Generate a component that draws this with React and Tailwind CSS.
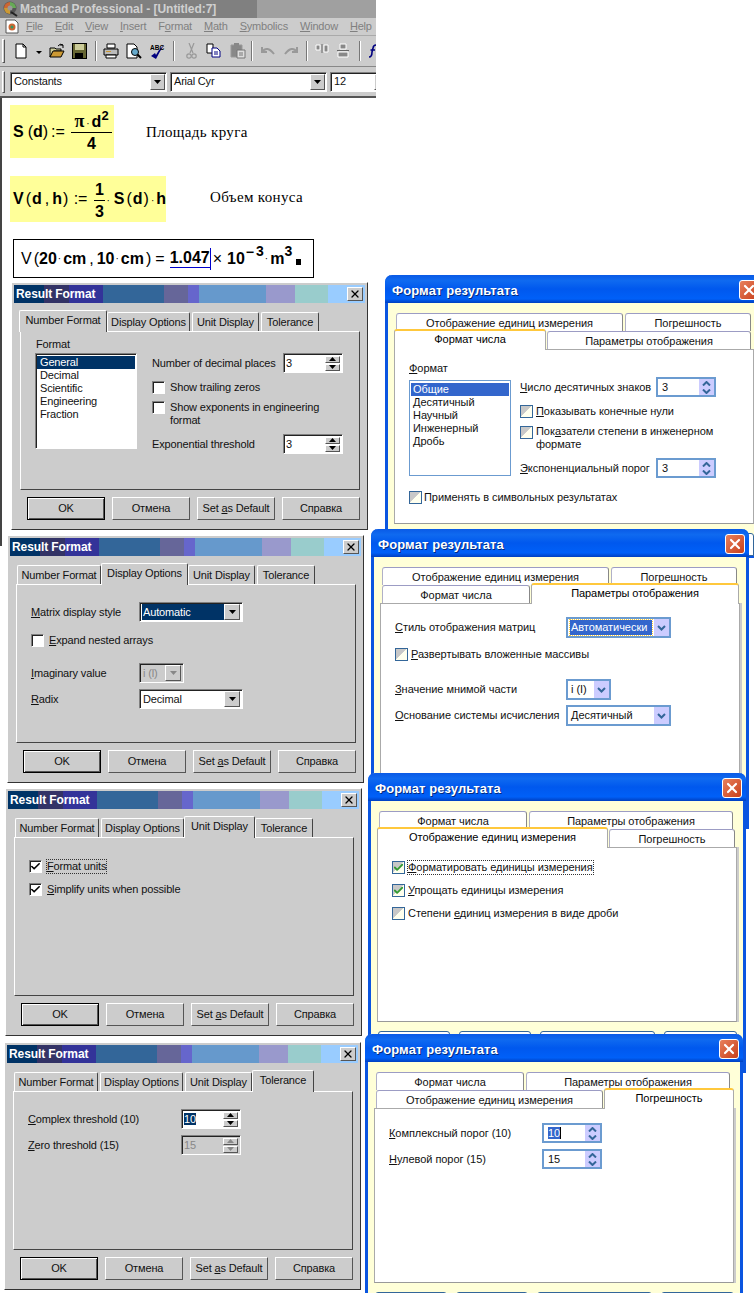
import { Check, X } from 'lucide-react'

const sunken = 'border border-t-[#808080] border-l-[#808080] border-r-white border-b-white shadow-[inset_1px_1px_0_#222]'
const raised = 'border border-t-white border-l-white border-r-[#555] border-b-[#555] bg-[#ccc]'

function Tri({ up = false, color = '#000' }) {
  return (
    <svg width="7" height="4" viewBox="0 0 7 4" className="block">
      <path d={up ? 'M3.5 0 L7 4 L0 4 Z' : 'M0 0 L7 0 L3.5 4 Z'} fill={color} />
    </svg>
  )
}

/* ---------- Win2k "Result Format" dialog ---------- */

function WinSpin({ value, selected, disabled }) {
  return (
    <div className={`${sunken} flex h-[20px] w-[60px] items-center pl-[2px] pr-[2px] ${disabled ? 'bg-[#ccc] text-[#888]' : 'bg-white'}`}>
      <span className="flex-1 leading-[14px]"><span className={selected ? 'bg-[#003366] text-white' : ''}>{value}</span></span>
      <div className="flex flex-col gap-[1px]">
        <div className={`${raised} flex h-[7px] w-[15px] items-center justify-center`}><Tri up color={disabled ? '#888' : '#000'} /></div>
        <div className={`${raised} flex h-[7px] w-[15px] items-center justify-center`}><Tri color={disabled ? '#888' : '#000'} /></div>
      </div>
    </div>
  )
}

function WinCombo({ value, className, selected, disabled }) {
  return (
    <div className={`${sunken} flex h-[20px] items-center pl-[2px] pr-[2px] ${disabled ? 'bg-[#ccc] text-[#888]' : 'bg-white'} ${className}`}>
      <span className={`flex h-[16px] flex-1 items-center pl-[1px] ${selected ? 'bg-[#003366] text-white' : ''}`}>{value}</span>
      <div className={`${raised} flex h-[16px] w-[16px] items-center justify-center`}><Tri color={disabled ? '#888' : '#000'} /></div>
    </div>
  )
}

function WinCheck({ checked, className = '' }) {
  return (
    <span className={`${sunken} flex h-[13px] w-[13px] shrink-0 items-center justify-center bg-white ${className}`}>
      {checked && <Check size={11} strokeWidth={3.5} color="#000" />}
    </span>
  )
}

const winTabs = [
  { label: 'Number Format', w: 'w-[84px]' },
  { label: 'Display Options', w: 'w-[83px]' },
  { label: 'Unit Display', w: 'w-[67px]' },
  { label: 'Tolerance', w: 'w-[58px]' },
]

function ResultFormat({ pos, active, children }) {
  return (
    <div className={`absolute ${pos} h-[248px] w-[357px] border border-t-white border-l-white border-r-[#333] border-b-[#333] bg-[#ccc] p-[2px] text-[11px] leading-[13px] tracking-[-0.15px] text-[#111]`}>
      <div className="flex h-[18px] items-stretch">
        <div className="w-[30px] bg-[#003366]" />
        <div className="w-[25px] bg-[#333366]" />
        <div className="w-[34px] bg-[#333399]" />
        <div className="w-[61px] bg-[#336699]" />
        <div className="w-[24px] bg-[#666699]" />
        <div className="w-[11px] bg-[#6666cc]" />
        <div className="w-[67px] bg-[#6699cc]" />
        <div className="w-[29px] bg-[#9999cc]" />
        <div className="w-[33px] bg-[#99cccc]" />
        <div className="relative flex-1 bg-[#99ccff]">
          <div className={`${raised} absolute right-[2px] top-[2px] flex h-[14px] w-[16px] items-center justify-center`}>
            <X size={12} strokeWidth={2.6} color="#000" />
          </div>
        </div>
        <span className="absolute left-[4px] top-[2px] flex h-[18px] items-center text-[12px] font-bold tracking-[-0.1px] text-white">Result Format</span>
      </div>
      <div className="mt-[8px] flex h-[20px] gap-[2px] pl-[7px]">
        {winTabs.map((t, i) => (
          <div key={t.label} className={`relative ${t.w} ${i === active ? 'z-10' : ''}`}>
            <div className={`absolute flex items-center justify-center whitespace-nowrap rounded-t-[2px] border-t border-l border-r border-t-white border-l-white border-r-[#444] bg-[#ccc] ${i === active ? '-inset-x-[2px] -top-[1px] bottom-[-1px] pb-[3px]' : 'inset-x-0 top-[1px] bottom-0'}`}>
              {t.label}
            </div>
          </div>
        ))}
      </div>
      <div className="ml-[6px] h-[159px] w-[340px] border border-t-white border-l-white border-r-[#444] border-b-[#444]">{children}</div>
      <div className="ml-[13px] mt-[7px] flex gap-[7px]">
        <div className="flex h-[23px] w-[78px] items-center justify-center border border-black bg-[#ccc] shadow-[inset_1px_1px_0_#fff,inset_-1px_-1px_0_#555]">OK</div>
        <div className={`${raised} flex h-[23px] w-[78px] items-center justify-center`}>Отмена</div>
        <div className={`${raised} flex h-[23px] w-[78px] items-center justify-center`}><span>Set <u>a</u>s Default</span></div>
        <div className={`${raised} flex h-[23px] w-[78px] items-center justify-center`}>Справка</div>
      </div>
    </div>
  )
}

function NumberFormatPage() {
  return (
    <div className="flex pl-[14px] pt-[6px]">
      <div>
        <div className="pl-[1px]">Format</div>
        <div className={`${sunken} mt-[2px] h-[96px] w-[102px] bg-white p-[1px] pt-[2px]`}>
          {['General', 'Decimal', 'Scientific', 'Engineering', 'Fraction'].map((f, i) => (
            <div key={f} className={`h-[13px] pl-[3px] ${i === 0 ? 'bg-[#003366] text-white' : ''}`}>{f}</div>
          ))}
        </div>
      </div>
      <div className="ml-[15px] w-[191px] pt-[15px]">
        <div className="flex items-center justify-between"><span className="whitespace-nowrap">Number of decimal places</span><WinSpin value="3" /></div>
        <div className="mt-[7px] flex h-[14px] items-center gap-[5px]"><WinCheck />Show trailing zeros</div>
        <div className="mt-[7px] flex gap-[5px]"><WinCheck /><span>Show exponents in engineering<br />format</span></div>
        <div className="mt-[7px] flex items-center justify-between"><span>Exponential threshold</span><WinSpin value="3" /></div>
      </div>
    </div>
  )
}

function DisplayOptionsPage() {
  return (
    <div className="pl-[14px] pt-[17px]">
      <div className="flex items-center"><span className="w-[108px]"><u>M</u>atrix display style</span><WinCombo value="Automatic" selected className="w-[104px]" /></div>
      <div className="mt-[12px] flex items-center gap-[5px]"><WinCheck /><span><u>E</u>xpand nested arrays</span></div>
      <div className="mt-[16px] flex items-center"><span className="w-[108px]"><u>I</u>maginary value</span><WinCombo value="i (l)" disabled className="w-[45px]" /></div>
      <div className="mt-[6px] flex items-center"><span className="w-[108px]"><u>R</u>adix</span><WinCombo value="Decimal" className="w-[104px]" /></div>
    </div>
  )
}

function UnitDisplayPage() {
  return (
    <div className="pl-[14px] pt-[22px]">
      <div className="flex items-center gap-[5px]"><WinCheck checked /><span className="outline-1 outline-dotted outline-[#333]"><u>F</u>ormat units</span></div>
      <div className="mt-[10px] flex items-center gap-[5px]"><WinCheck checked /><span><u>S</u>implify units when possible</span></div>
    </div>
  )
}

function TolerancePage() {
  return (
    <div className="pl-[14px] pt-[17px]">
      <div className="flex items-center"><span className="w-[153px]"><u>C</u>omplex threshold (10)</span><WinSpin value="10" selected /></div>
      <div className="mt-[6px] flex items-center"><span className="w-[153px]"><u>Z</u>ero threshold (15)</span><WinSpin value="15" disabled /></div>
    </div>
  )
}

/* ---------- XP themed dialog ---------- */

function XpSpin({ value, selected }) {
  return (
    <div className="flex h-[20px] w-[60px] items-center border-2 border-[#6b9bd0] bg-white pl-[4px]">
      <span className="flex-1"><span className={selected ? 'bg-[#3366cc] text-white' : ''}>{value}</span>{selected && <span className="border-r border-black" />}</span>
      <div className="flex h-[16px] w-[15px] flex-col items-center justify-center gap-[3px] bg-[#ccccff]">
        <svg width="9" height="5" viewBox="0 0 9 5"><path d="M1 4.5 L4.5 1 L8 4.5" fill="none" stroke="#336699" strokeWidth="2" /></svg>
        <svg width="9" height="5" viewBox="0 0 9 5"><path d="M1 .5 L4.5 4 L8 .5" fill="none" stroke="#336699" strokeWidth="2" /></svg>
      </div>
    </div>
  )
}

function XpCombo({ value, selected, className }) {
  return (
    <div className={`flex h-[21px] items-center border-2 border-[#6b9bd0] bg-white pl-[2px] ${className}`}>
      <span className={`flex h-[15px] flex-1 items-center pl-[1px] ${selected ? 'mr-[2px] bg-[#3366cc] text-white outline-1 outline-dotted outline-[#ffcc33]' : ''}`}>{value}</span>
      <div className="flex h-[17px] w-[15px] items-center justify-center bg-[#ccccff]">
        <svg width="9" height="6" viewBox="0 0 9 6"><path d="M1 1 L4.5 4.5 L8 1" fill="none" stroke="#336699" strokeWidth="2" /></svg>
      </div>
    </div>
  )
}

function XpCheck({ checked, className = '' }) {
  return (
    <span className={`relative flex h-[13px] w-[13px] shrink-0 items-center justify-center border border-[#336699] bg-[linear-gradient(135deg,#c8c8c8_45%,#ffffee_50%)] ${className}`}>
      {checked && <Check size={11} strokeWidth={4} color="#339933" />}
    </span>
  )
}

function XpTab({ label, w, active }) {
  return (
    <div className={`relative h-[18px] ${w} ${active ? 'z-10' : ''}`}>
      <div className={`absolute flex items-center justify-center whitespace-nowrap rounded-t-[3px] bg-white ${active ? '-inset-x-[2px] -top-[2px] bottom-[-1px] border-x border-x-[#aaa] border-t-2 border-t-[#ffc83c] pb-[3px] text-black' : 'inset-0 border-t border-l border-r border-t-[#9c9cc4] border-l-[#b0b0c8] border-r-[#888] pt-[2px]'}`}>
        {label}
      </div>
    </div>
  )
}

function XpDialog({ pos, rows, active, children }) {
  return (
    <div className={`absolute ${pos} w-[378px] rounded-t-[7px] border-x-[3px] border-b-[3px] border-[#0a55e0] bg-[#ffffd8] text-[11px] leading-[13px] tracking-[-0.05px] text-[#111]`}>
      <div className="relative -mx-[3px] flex h-[28px] items-center rounded-t-[7px] bg-[linear-gradient(to_bottom,#0a5ae6_0%,#0f6af0_20%,#0058ee_50%,#0060f8_85%,#003fc0_100%)] pl-[7px] pt-[3px]">
        <span className="text-[13px] font-bold tracking-[0.1px] text-white [text-shadow:1px_1px_0_#002a80]">Формат результата</span>
        <div className="absolute right-[4px] top-[5px] flex h-[20px] w-[20px] items-center justify-center rounded-[3px] border border-white bg-[linear-gradient(135deg,#e8805c,#c8401c)]">
          <X size={16} strokeWidth={3.2} color="#fff" />
        </div>
      </div>
      <div className="px-[6px] pt-[10px]">
        {rows.map((row, r) => (
          <div key={r} className={`flex pl-[2px] ${r === 0 ? 'gap-[2px]' : 'gap-[3px]'}`}>
            {row.map(t => <XpTab key={t.label} label={t.label} w={t.w} active={t.label === active} />)}
          </div>
        ))}
        <div className="h-[175px] w-[360px] border border-[#aaa] border-b-[#999] border-r-[#aaa] bg-white shadow-[2px_0_0_#ccc]">{children}</div>
        <div className="mt-[9px] flex gap-[9px] pl-[1px]">
          {['w-[72px]', 'w-[72px]', 'w-[115px]', 'w-[73px]'].map((w, i) => (
            <div key={i} className={`h-[23px] ${w} rounded-t-[3px] border border-[#336699] bg-white`} />
          ))}
        </div>
      </div>
    </div>
  )
}

const tabA = { label: 'Формат числа', w: 'w-[148px]' }
const tabB = { label: 'Параметры отображения', w: 'w-[204px]' }
const tabC = { label: 'Отображение единиц измерения', w: 'w-[227px]' }
const tabD = { label: 'Погрешность', w: 'w-[126px]' }

function XpNumberPage() {
  return (
    <div className="px-[14px] pt-[12px]">
      <div className="flex">
        <div>
          <div><u>Ф</u>ормат</div>
          <div className="mt-[5px] h-[96px] w-[102px] border border-[#6b9bd0] bg-white p-[1px] pt-[2px]">
            {['Общие', 'Десятичный', 'Научный', 'Инженерный', 'Дробь'].map((f, i) => (
              <div key={f} className={`h-[13px] pl-[2px] ${i === 0 ? 'bg-[#3366cc] text-white' : ''}`}>{f}</div>
            ))}
          </div>
        </div>
        <div className="ml-[9px] w-[196px] pt-[15px]">
          <div className="flex items-center justify-between"><span className="whitespace-nowrap"><u>Ч</u>исло десятичных знаков</span><XpSpin value="3" /></div>
          <div className="mt-[8px] flex h-[13px] items-center gap-[3px]"><XpCheck /><span><u>П</u>оказывать конечные нули</span></div>
          <div className="mt-[7px] flex gap-[3px]"><XpCheck className="mt-[1px]" /><span className="whitespace-nowrap">Пок<u>а</u>затели степени в инженерном<br />формате</span></div>
          <div className="mt-[7px] flex items-center justify-between"><span className="whitespace-nowrap"><u>Э</u>кспоненциальный порог</span><XpSpin value="3" /></div>
        </div>
      </div>
      <div className="mt-[13px] flex items-center gap-[2px]"><XpCheck />Применять в символьных результатах</div>
    </div>
  )
}

function XpDisplayPage() {
  return (
    <div className="pl-[14px] pt-[13px]">
      <div className="flex items-center"><span className="w-[171px]"><u>С</u>тиль отображения матриц</span><XpCombo value="Автоматически" selected className="w-[105px]" /></div>
      <div className="mt-[10px] flex items-center gap-[3px]"><XpCheck /><span><u>Р</u>азвертывать вложенные массивы</span></div>
      <div className="mt-[18px] flex items-center"><span className="w-[171px]"><u>З</u>начение мнимой части</span><XpCombo value="i (I)" className="w-[45px]" /></div>
      <div className="mt-[5px] flex items-center"><span className="w-[171px] whitespace-nowrap"><u>О</u>снование системы исчисления</span><XpCombo value="Десятичный" className="w-[105px]" /></div>
    </div>
  )
}

function XpUnitPage() {
  return (
    <div className="pl-[14px] pt-[13px]">
      <div className="flex items-center gap-[3px]"><XpCheck checked /><span className="outline-1 outline-dotted outline-[#333]"><u>Ф</u>орматировать единицы измерения</span></div>
      <div className="mt-[10px] flex items-center gap-[3px]"><XpCheck checked /><span><u>У</u>прощать единицы измерения</span></div>
      <div className="mt-[10px] flex items-center gap-[3px]"><XpCheck /><span>Степени <u>е</u>диниц измерения в виде дроби</span></div>
    </div>
  )
}

function XpTolerancePage() {
  return (
    <div className="pl-[14px] pt-[14px]">
      <div className="flex items-center"><span className="w-[153px]"><u>К</u>омплексный порог (10)</span><XpSpin value="10" selected /></div>
      <div className="mt-[6px] flex items-center"><span className="w-[153px]"><u>Н</u>улевой порог (15)</span><XpSpin value="15" /></div>
    </div>
  )
}

/* ---------- Mathcad main window ---------- */

function Ic({ w, ml, children, vb }) {
  return <svg width={w} height="16" viewBox={vb || `0 0 ${w} 16`} className={`shrink-0 ${ml}`}>{children}</svg>
}

function Sep({ ml }) {
  return <div className={`h-[20px] w-[2px] shrink-0 border-l border-l-[#777] border-r border-r-white ${ml}`} />
}

function Toolbar() {
  return (
    <div className="flex h-[31px] items-center border-b border-b-[#888] bg-[#ccc] pl-[2px]">
      <div className={`${raised} h-[24px] w-[3px] shrink-0`} />
      <Ic w={12} ml="ml-[10px]"><path d="M1 1 H8 L11 4 V15 H1 Z" fill="#fff" stroke="#000" /><path d="M8 1 V4 H11" fill="none" stroke="#000" /></Ic>
      <svg width="6" height="3" viewBox="0 0 6 3" className="ml-[9px] mt-[3px] shrink-0"><path d="M0 0 H6 L3 3 Z" fill="#000" /></svg>
      <Ic w={16} ml="ml-[7px]"><path d="M1 5 H6 L7 6 H12 V8 H5 L1 14 Z" fill="#cc9" stroke="#000" /><path d="M1 14 L4 8 H15 L12 14 Z" fill="#cc9933" stroke="#000" /><path d="M9 3 Q11 0 14 2 M14 2 V5 M14 2 H11" fill="none" stroke="#000" /></Ic>
      <Ic w={15} ml="ml-[7px]"><rect x=".5" y=".5" width="14" height="15" fill="#666633" stroke="#000" /><rect x="3" y="1" width="9" height="6" fill="#cc9" /><rect x="3" y="10" width="8" height="5" fill="#000" /></Ic>
      <Sep ml="ml-[8px]" />
      <Ic w={16} ml="ml-[6px]"><path d="M4 1 H12 V5 H4 Z" fill="#fff" stroke="#000" /><path d="M1 6 H15 V12 H1 Z" fill="#bbb" stroke="#000" /><path d="M3 12 H13 V15 H3 Z" fill="#fff" stroke="#000" /><rect x="3" y="8" width="5" height="1" fill="#cc9933" /></Ic>
      <Ic w={16} ml="ml-[7px]"><path d="M1 1 H8 L11 4 V15 H1 Z" fill="#fff" stroke="#000" /><circle cx="9" cy="9" r="3.5" fill="#66aacc" stroke="#000" /><path d="M11.5 11.5 L15 15" stroke="#000" strokeWidth="2" /></Ic>
      <Ic w={15} ml="ml-[8px]"><path d="M1 13 L5 10 L6 12 Q9 6 14 2 Q10 8 6 16 Z" fill="#000080" /><text x="0" y="7" fontSize="6.5" fontWeight="700" fontFamily="Liberation Sans" fill="#000">ABC</text></Ic>
      <Sep ml="ml-[8px]" />
      <Ic w={11} ml="ml-[11px]"><path d="M3 0 L7 10 M8 0 L4 10" stroke="#999" strokeWidth="1.2" /><circle cx="3" cy="13" r="2.2" fill="none" stroke="#999" strokeWidth="1.2" /><circle cx="8" cy="13" r="2.2" fill="none" stroke="#999" strokeWidth="1.2" /></Ic>
      <Ic w={15} ml="ml-[9px]"><path d="M1 1 H7 V10 H1 Z" fill="#fff" stroke="#000" /><path d="M6 5 H11 L14 8 V14 H6 Z" fill="#fff" stroke="#000080" /><path d="M8 9 H12 M8 11 H12" stroke="#000080" /></Ic>
      <Ic w={17} ml="ml-[8px]"><path d="M2 2 H13 V14 H2 Z" fill="#888" stroke="#999" /><rect x="5" y="0" width="5" height="3" fill="#888" /><path d="M8 7 H16 V15 H8 Z" fill="#ddd" stroke="#777" /><path d="M10 10 H14 M10 12 H14" stroke="#777" /></Ic>
      <Sep ml="ml-[5px]" />
      <Ic w={14} ml="ml-[8px]"><path d="M1 4 L1 9 L6 9 M1 9 Q6 2 13 11" fill="none" stroke="#999" strokeWidth="2" /></Ic>
      <Ic w={14} ml="ml-[9px]"><path d="M13 4 L13 9 L8 9 M13 9 Q8 2 1 11" fill="none" stroke="#999" strokeWidth="2" /></Ic>
      <Sep ml="ml-[8px]" />
      <Ic w={14} ml="ml-[7px]"><path d="M1 2 H5 V7 H1 Z M9 2 H13 V9 H9 Z" fill="#888" stroke="#fff" /><path d="M7 1 V10" stroke="#666" /></Ic>
      <Ic w={12} ml="ml-[8px]"><path d="M3 1 H9 V6 H3 Z M1 9 H11 V14 H1 Z" fill="#888" stroke="#fff" /><path d="M0 7.5 H12" stroke="#666" /></Ic>
      <Sep ml="ml-[10px]" />
      <svg width="14" height="16" viewBox="0 0 14 16" className="ml-[6px] shrink-0"><path d="M2 14 Q5 14 5 9 L6 5 Q6.5 2 9 2 M3.5 7 H8" fill="none" stroke="#000080" strokeWidth="1.6" /><path d="M11 4 Q9 8 10.5 13" fill="none" stroke="#000080" strokeWidth="1.4" /></svg>
    </div>
  )
}

function Menu() {
  const items = [<><u>F</u>ile</>, <><u>E</u>dit</>, <><u>V</u>iew</>, <><u>I</u>nsert</>, <>F<u>o</u>rmat</>, <><u>M</u>ath</>, <><u>S</u>ymbolics</>, <><u>W</u>indow</>, <><u>H</u>elp</>]
  return (
    <div className="flex h-[18px] items-center border-b border-b-[#aaa] bg-[#ccc] pl-[5px] text-[11px] tracking-[-0.2px] text-[#808080]">
      <svg width="14" height="15" viewBox="0 0 14 15" className="shrink-0"><path d="M1 1 H10 L13 4 V14 H1 Z" fill="#fff" stroke="#555" /><circle cx="7" cy="8" r="3.5" fill="#cc6633" /><circle cx="7" cy="8" r="1.5" fill="#339966" /></svg>
      <div className="ml-[7px] flex gap-[12px] whitespace-nowrap">
        {items.map((m, i) => <span key={i}>{m}</span>)}
      </div>
    </div>
  )
}

function FormatBar() {
  const field = `${sunken} flex h-[20px] shrink-0 items-center bg-white pl-[3px]`
  const arrow = `${raised} flex h-[16px] w-[15px] shrink-0 items-center justify-center`
  return (
    <div className="flex h-[31px] items-center border-b-2 border-b-[#555] bg-[#ccc] pl-[2px] text-[11px] tracking-[-0.2px] text-[#111]">
      <div className={`${raised} h-[22px] w-[3px] shrink-0`} />
      <div className={`${field} ml-[5px] w-[157px]`}><span className="flex-1">Constants</span><div className={`${arrow} mr-[1px]`}><Tri /></div></div>
      <div className={`${field} ml-[3px] w-[157px]`}><span className="flex-1">Arial Cyr</span><div className={`${arrow} mr-[1px]`}><Tri /></div></div>
      <div className={`${field} ml-[3px] w-[60px]`}><span className="flex-1">12</span><div className={arrow}><Tri /></div></div>
    </div>
  )
}

function Frac({ top, bottom, w }) {
  return (
    <div className={`flex flex-col items-center ${w}`}>
      <div className="flex h-[24px] items-end pb-[2px] leading-none">{top}</div>
      <div className="h-[1px] w-full bg-black" />
      <div className="flex h-[22px] items-center leading-none">{bottom}</div>
    </div>
  )
}

function Dot({ ml = '' }) {
  return <span className={`text-[10px] font-normal ${ml}`}>·</span>
}

function Worksheet() {
  return (
    <div className="h-[448px] border-l-2 border-l-[#444] bg-white text-[16px] font-bold text-black">
      <div className="ml-[8px] flex pt-[7px]">
        <div className="flex h-[53px] w-[104px] items-center bg-[#ffff99] pl-[3px]">
          <span className="w-[38px] whitespace-nowrap">S<span className="ml-[4px] font-normal">(</span>d<span className="font-normal">)</span></span>
          <span className="w-[20px] font-normal">:=</span>
          <Frac w="w-[41px]" bottom="4" top={<span className="whitespace-nowrap"><span className="font-['Liberation_Serif',serif] text-[18px]">π</span><Dot ml="mx-[2px]" />d<span className="relative -top-[7px] text-[13px]">2</span></span>} />
        </div>
        <span className="ml-[32px] mt-[18px] font-['Liberation_Serif',serif] text-[15px] font-normal leading-[18px] tracking-[0.35px]">Площадь круга</span>
      </div>
      <div className="ml-[8px] mt-[18px] flex">
        <div className="flex h-[46px] w-[156px] items-center bg-[#ffff99] pl-[3px]">
          <span className="w-[61px] whitespace-nowrap">V<span className="ml-[2px] font-normal">(</span><span className="ml-[1px]">d</span><span className="mx-[3px] font-normal">,</span>h<span className="ml-[1px] font-normal">)</span></span>
          <span className="w-[20px] font-normal">:=</span>
          <Frac w="w-[12px]" top="1" bottom="3" />
          <span className="ml-[1px] whitespace-nowrap"><Dot ml="mr-[4px]" />S<span className="ml-[2px] font-normal">(</span><span className="ml-[1px]">d</span><span className="ml-[1px] font-normal">)</span><Dot ml="mx-[2px]" />h</span>
        </div>
        <span className="ml-[44px] mt-[12px] font-['Liberation_Serif',serif] text-[15px] font-normal leading-[18px] tracking-[0.35px]">Объем конуса</span>
      </div>
      <div className="ml-[11px] mt-[17px] flex h-[39px] w-[301px] items-center whitespace-nowrap border-[1.5px] border-black pl-[7px] text-[16px] font-normal">
        <span>V</span>
        <span className="ml-[2px]">(</span>
        <b>20</b>
        <Dot ml="ml-[1px]" />
        <b className="ml-[2px]">cm</b>
        <span className="ml-[3px]">,</span>
        <b className="ml-[3px]">10</b>
        <Dot ml="ml-[1px]" />
        <b className="ml-[2px]">cm</b>
        <span className="ml-[2px]">)</span>
        <span className="ml-[4px]">=</span>
        <b className="ml-[5px] border-b border-b-[#0000cc] leading-[18px]">1.047</b>
        <span className="h-[22px] w-[1px] bg-[#0000cc]" />
        <span className="ml-[2px]">×</span>
        <b className="ml-[5px]">10</b>
        <b className="relative -top-[6px] ml-[1px] text-[14px]">−</b>
        <b className="relative -top-[7px] ml-[2px] text-[14px]">3</b>
        <Dot ml="ml-[1px]" />
        <b className="ml-[2px]">m</b>
        <b className="relative -top-[7px] text-[14px]">3</b>
        <span className="ml-[4px] mt-[7px] h-[6px] w-[5px] bg-black" />
      </div>
    </div>
  )
}

function MathcadWindow() {
  return (
    <div className="absolute left-0 top-0 w-[376px] overflow-hidden">
      <div className="flex h-[18px] items-center bg-[#a0a0a0]">
        <div className="flex h-full w-[257px] items-center bg-[#808080] pl-[2px]">
          <svg width="16" height="16" viewBox="0 0 16 16" className="shrink-0">
            <circle cx="8" cy="7" r="6.5" fill="#555" />
            <path d="M2 7 A6 6 0 0 1 8 1 L8 7 Z" fill="#cc6633" />
            <path d="M8 1 A6 6 0 0 1 14 7 L8 7 Z" fill="#66aa55" />
            <path d="M2 7 A6 6 0 0 0 8 13 L8 7 Z" fill="#cc9933" />
            <circle cx="8" cy="7" r="2.5" fill="#999" />
            <path d="M9 11 L15 15" stroke="#222" strokeWidth="2" />
          </svg>
          <span className="ml-[2px] whitespace-nowrap text-[12px] font-bold tracking-[-0.05px] text-[#d0d0d0]">Mathcad Professional - [Untitled:7]</span>
        </div>
      </div>
      <Menu />
      <Toolbar />
      <FormatBar />
      <Worksheet />
    </div>
  )
}

export default function App() {
  return (
    <div className="relative h-[1293px] w-[754px] overflow-hidden bg-white font-['Liberation_Sans',sans-serif]">
      <MathcadWindow />
      <ResultFormat pos="left-[11px] top-[282px]" active={0}><NumberFormatPage /></ResultFormat>
      <ResultFormat pos="left-[7px] top-[535px]" active={1}><DisplayOptionsPage /></ResultFormat>
      <ResultFormat pos="left-[5px] top-[788px]" active={2}><UnitDisplayPage /></ResultFormat>
      <ResultFormat pos="left-[4px] top-[1042px]" active={3}><TolerancePage /></ResultFormat>

      <XpDialog pos="left-[385px] top-[275px] h-[283px]" rows={[[tabC, tabD], [tabA, tabB]]} active="Формат числа"><XpNumberPage /></XpDialog>
      <XpDialog pos="left-[371px] top-[529px] h-[300px]" rows={[[tabC, tabD], [tabA, tabB]]} active="Параметры отображения"><XpDisplayPage /></XpDialog>
      <XpDialog pos="left-[368px] top-[773px] h-[300px]" rows={[[tabA, tabB], [tabC, tabD]]} active="Отображение единиц измерения"><XpUnitPage /></XpDialog>
      <XpDialog pos="left-[365px] top-[1034px] h-[300px]" rows={[[tabA, tabB], [tabC, tabD]]} active="Погрешность"><XpTolerancePage /></XpDialog>
    </div>
  )
}
